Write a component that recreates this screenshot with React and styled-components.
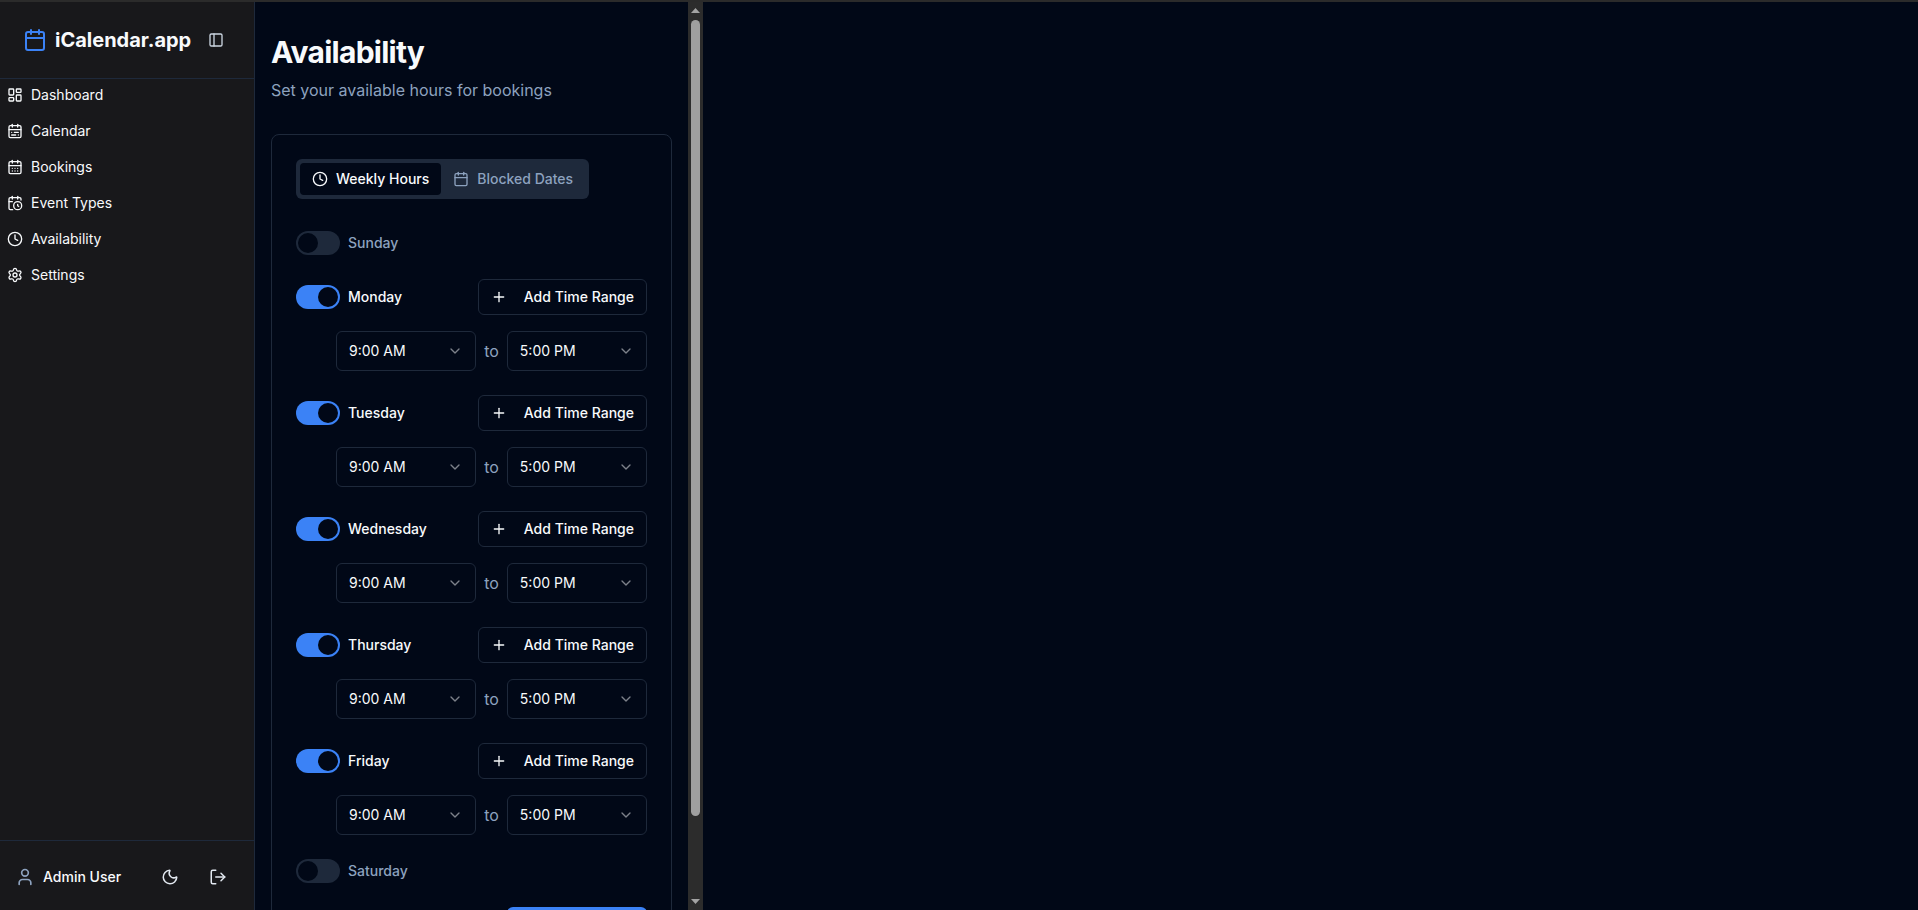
import React from "react";
import styled, { createGlobalStyle } from "styled-components";
import {
  Calendar,
  CalendarClock,
  CalendarDays,
  CalendarRange,
  ChevronDown,
  Clock,
  LayoutDashboard,
  LogOut,
  Moon,
  PanelLeft,
  Plus,
  Settings,
  User,
} from "lucide-react";

const GlobalStyle = createGlobalStyle`
  * {
    box-sizing: border-box;
  }
  html, body {
    margin: 0;
    height: 100%;
    overflow: hidden;
    background: #010817;
    font-family: "Inter", "Liberation Sans", sans-serif;
    line-height: 20px;
  }
`;

const Shell = styled.div`
  display: flex;
  height: 100vh;
  border-top: 2px solid #2b2b2b;
  background: #010817;
`;

const Sidebar = styled.aside`
  display: flex;
  flex-direction: column;
  flex: 0 0 255px;
  background: #18181b;
  border-right: 1px solid #1e293b;
`;

const Brand = styled.div`
  display: flex;
  align-items: center;
  flex: 0 0 77px;
  padding-left: 23px;
  border-bottom: 1px solid #1e293b;
`;

const BrandName = styled.span`
  margin-left: 8px;
  font-size: 20px;
  line-height: 28px;
  font-weight: 700;
  color: #f8fafc;
`;

const Collapse = styled.span`
  display: flex;
  margin-left: 17px;
  color: #cbd5e1;
`;

const Nav = styled.nav`
  display: flex;
  flex-direction: column;
  flex: 1;
  margin-top: -2px;
`;

const NavItem = styled.a`
  display: flex;
  align-items: center;
  gap: 8px;
  height: 36px;
  padding-left: 7px;
  font-size: 14px;
  font-weight: 400;
  color: #f8fafc;
`;

const Footer = styled.div`
  display: flex;
  align-items: center;
  flex: 0 0 70px;
  padding: 3px 0 0 15px;
  border-top: 1px solid #1e293b;
`;

const UserName = styled.span`
  margin-left: 8px;
  width: 118px;
  font-size: 14px;
  font-weight: 500;
  color: #f8fafc;
`;

const FooterIcons = styled.div`
  display: flex;
  gap: 30px;
  color: #e2e8f0;
`;

const Main = styled.main`
  flex: 0 0 433px;
  height: 100%;
  padding: 32px 16px 24px;
  overflow: hidden;
  background: #010817;
`;

const ScrollTrack = styled.div`
  display: flex;
  flex-direction: column;
  flex: 0 0 15px;
  height: 100%;
  background: #2c2c2c;
`;

const ScrollArrow = styled.svg`
  display: block;
  flex: 0 0 17px;
  width: 15px;
  height: 17px;
  fill: #a3a3a3;
`;

const ScrollThumb = styled.div`
  flex: 0 0 796px;
  margin: 1px 3px 0;
  border-radius: 5px;
  background: #9f9f9f;
`;

const ScrollRest = styled.div`
  flex: 1;
`;

const Title = styled.h1`
  margin: 0;
  font-size: 30px;
  line-height: 36px;
  font-weight: 700;
  letter-spacing: -0.75px;
  color: #f8fafc;
`;

const Subtitle = styled.p`
  margin: 8px 0 0;
  font-size: 16px;
  line-height: 24px;
  color: #8da2bf;
`;

const Card = styled.section`
  margin-top: 32px;
  padding: 24px;
  border: 1px solid #1e293b;
  border-radius: 8px;
`;

const TabList = styled.div`
  display: inline-flex;
  height: 40px;
  padding: 4px;
  background: #1e293b;
  border-radius: 6px;
`;

const Tab = styled.button`
  display: flex;
  align-items: center;
  gap: 8px;
  padding: 0 12px;
  border: 0;
  border-radius: 4px;
  font: 500 14px/20px "Inter", sans-serif;
  color: ${(p) => (p.$active ? "#f8fafc" : "#8da2bf")};
  background: ${(p) => (p.$active ? "#010817" : "transparent")};
`;

const DayList = styled.div`
  display: flex;
  flex-direction: column;
  gap: 24px;
  margin-top: 32px;
`;

const DayHead = styled.div`
  display: flex;
  align-items: center;
  justify-content: space-between;
`;

const DayLabel = styled.div`
  display: flex;
  align-items: center;
  gap: 8px;
  font-size: 14px;
  font-weight: 500;
  color: ${(p) => (p.$on ? "#f8fafc" : "#8da2bf")};
`;

const Toggle = styled.span`
  display: flex;
  justify-content: ${(p) => (p.$on ? "flex-end" : "flex-start")};
  width: 44px;
  height: 24px;
  border: 2px solid transparent;
  border-radius: 12px;
  background: ${(p) => (p.$on ? "#3b82f6" : "#1e293b")};

  &::after {
    content: "";
    width: 20px;
    height: 20px;
    border-radius: 50%;
    background: #010817;
  }
`;

const AddButton = styled.button`
  display: flex;
  align-items: center;
  gap: 17px;
  height: 36px;
  padding: 0 12px;
  background: #010817;
  border: 1px solid #1e293b;
  border-radius: 6px;
  font: 500 14px/20px "Inter", sans-serif;
  color: #f8fafc;
`;

const Range = styled.div`
  display: flex;
  align-items: center;
  gap: 8px;
  margin: 16px 0 0 40px;
`;

const TimeSelect = styled.div`
  display: flex;
  flex: 1;
  align-items: center;
  justify-content: space-between;
  height: 40px;
  padding: 0 12px;
  border: 1px solid #1e293b;
  border-radius: 6px;
  font-size: 14px;
  color: #f8fafc;

  svg {
    opacity: 0.5;
  }
`;

const To = styled.span`
  font-size: 16px;
  line-height: 24px;
  color: #8da2bf;
`;

const Actions = styled.div`
  display: flex;
  justify-content: flex-end;
  margin-top: 24px;
`;

const SaveButton = styled.button`
  width: 140px;
  height: 40px;
  border: 0;
  border-radius: 6px;
  background: #3b82f6;
  font: 500 14px/20px "Inter", sans-serif;
  color: #f8fafc;
`;

const navItems = [
  ["Dashboard", LayoutDashboard],
  ["Calendar", CalendarRange],
  ["Bookings", CalendarDays],
  ["Event Types", CalendarClock],
  ["Availability", Clock],
  ["Settings", Settings],
];

const days = [
  ["Sunday", false],
  ["Monday", true],
  ["Tuesday", true],
  ["Wednesday", true],
  ["Thursday", true],
  ["Friday", true],
  ["Saturday", false],
];

export default function App() {
  return (
    <Shell>
      <GlobalStyle />
      <Sidebar>
        <Brand>
          <Calendar size={24} color="#3b82f6" />
          <BrandName>iCalendar.app</BrandName>
          <Collapse>
            <PanelLeft size={16} />
          </Collapse>
        </Brand>
        <Nav>
          {navItems.map(([label, Icon]) => (
            <NavItem key={label}>
              <Icon size={16} />
              {label}
            </NavItem>
          ))}
        </Nav>
        <Footer>
          <User size={20} color="#8da2bf" />
          <UserName>Admin User</UserName>
          <FooterIcons>
            <Moon size={18} />
            <LogOut size={18} />
          </FooterIcons>
        </Footer>
      </Sidebar>
      <Main>
        <Title>Availability</Title>
        <Subtitle>Set your available hours for bookings</Subtitle>
        <Card>
          <TabList>
            <Tab $active>
              <Clock size={16} />
              Weekly Hours
            </Tab>
            <Tab>
              <Calendar size={16} />
              Blocked Dates
            </Tab>
          </TabList>
          <DayList>
            {days.map(([day, on]) => (
              <div key={day}>
                <DayHead>
                  <DayLabel $on={on}>
                    <Toggle $on={on} />
                    {day}
                  </DayLabel>
                  {on && (
                    <AddButton>
                      <Plus size={16} />
                      Add Time Range
                    </AddButton>
                  )}
                </DayHead>
                {on && (
                  <Range>
                    <TimeSelect>
                      9:00 AM
                      <ChevronDown size={16} />
                    </TimeSelect>
                    <To>to</To>
                    <TimeSelect>
                      5:00 PM
                      <ChevronDown size={16} />
                    </TimeSelect>
                  </Range>
                )}
              </div>
            ))}
          </DayList>
          <Actions>
            <SaveButton>Save Changes</SaveButton>
          </Actions>
        </Card>
      </Main>
      <ScrollTrack>
        <ScrollArrow viewBox="0 0 15 17">
          <polygon points="7.5,6 12,11 3,11" />
        </ScrollArrow>
        <ScrollThumb />
        <ScrollRest />
        <ScrollArrow viewBox="0 0 15 17">
          <polygon points="3,6 12,6 7.5,11" />
        </ScrollArrow>
      </ScrollTrack>
    </Shell>
  );
}
